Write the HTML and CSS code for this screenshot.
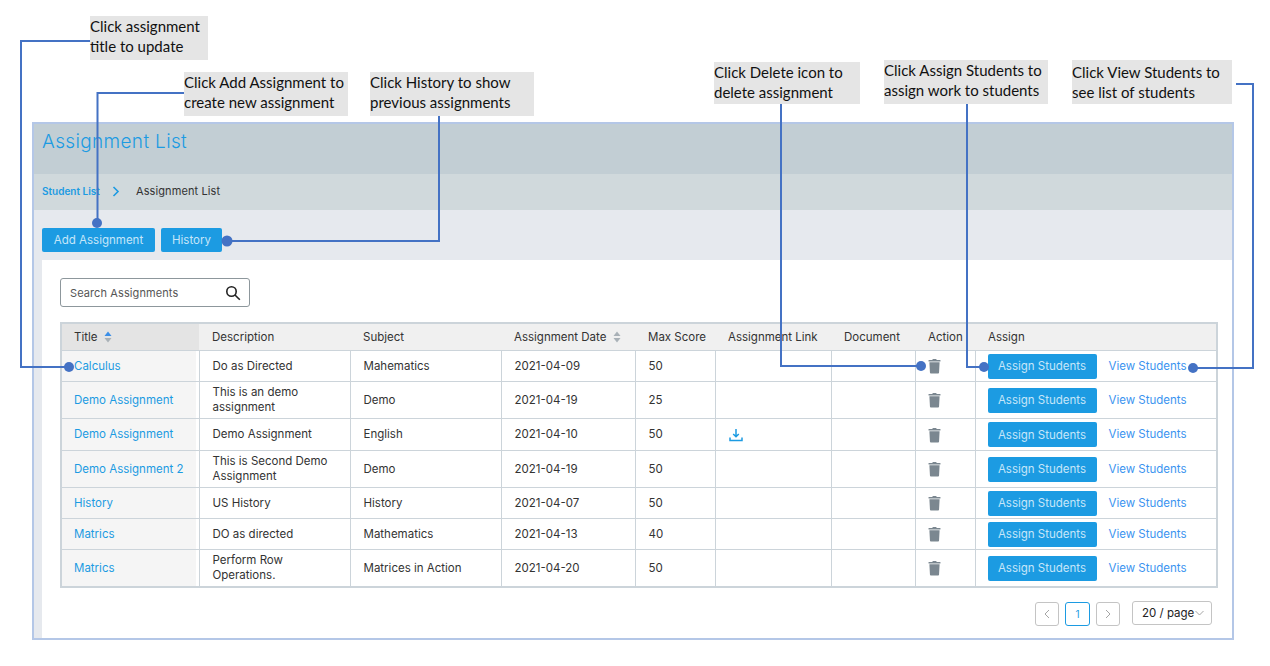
FILE: index.html
```html
<!DOCTYPE html>
<html lang="en">
<head>
    <meta charset="UTF-8">
    <title>Assignment List</title>
    <link rel="stylesheet" href="styles.css">
</head>
<body>
    <svg width="0" height="0" class="icon-defs">
        <symbol id="trash" viewBox="0 0 14 16">
            <path d="M4.6 1.6 5.2.4h3.6l.6 1.2H13.4v1.5H.6V1.6z"/>
            <path d="M1.5 4h11l-.6 11a1 1 0 0 1-1 1H3.1a1 1 0 0 1-1-1z"/>
        </symbol>
    </svg>

    <div class="frame">
        <div class="title-band"><h1>Assignment List</h1></div>
        <div class="crumb-band">
            <a class="crumb-link">Student List</a>
            <svg class="crumb-arrow" width="8" height="11" viewBox="0 0 8 11"><path d="M1.5 1 6 5.500 1.500 10"/></svg>
            <span class="crumb-current">Assignment List</span>
        </div>
        <div class="toolbar">
            <button class="btn btn-add">Add Assignment</button>
            <button class="btn btn-history">History</button>
        </div>
        <div class="content">
            <div class="search">
                <span>Search Assignments</span>
                <svg width="16" height="16" viewBox="0 0 16 16"><circle cx="6.500" cy="6.500" r="4.700"/><path d="M10 10l4.800 4.800"/></svg>
            </div>
            <table class="list">
                <colgroup>
                    <col class="c-title"><col class="c-desc"><col class="c-subject"><col class="c-date">
                    <col class="c-score"><col class="c-link"><col class="c-doc"><col class="c-action"><col class="c-assign">
                </colgroup>
                <thead>
                    <tr>
                        <th class="th-title">Title
                            <svg class="sort" width="8" height="12" viewBox="0 0 8 12"><path class="up" d="M4 .5 7.500 5H.5z"/><path class="down" d="M4 11.500.5 7h7z"/></svg>
                        </th>
                        <th>Description</th>
                        <th>Subject</th>
                        <th>Assignment Date
                            <svg class="sort" width="8" height="12" viewBox="0 0 8 12"><path class="down" d="M4 .5 7.500 5H.5z"/><path class="down" d="M4 11.500.5 7h7z"/></svg>
                        </th>
                        <th>Max Score</th>
                        <th>Assignment Link</th>
                        <th>Document</th>
                        <th>Action</th>
                        <th>Assign</th>
                    </tr>
                </thead>
                <tbody>
                    <tr class="r1">
                        <td class="td-title"><a>Calculus</a></td>
                        <td>Do as Directed</td><td>Mahematics</td><td>2021-04-09</td><td>50</td><td></td><td></td>
                        <td class="td-tight"><svg class="trash"><use href="#trash"/></svg></td>
                        <td class="td-tight"><div class="assign"><button class="btn btn-assign">Assign Students</button><a class="view">View Students</a></div></td>
                    </tr>
                    <tr class="r2">
                        <td class="td-title"><a>Demo Assignment</a></td>
                        <td>This is an demo<br>assignment</td><td>Demo</td><td>2021-04-19</td><td>25</td><td></td><td></td>
                        <td class="td-tight"><svg class="trash"><use href="#trash"/></svg></td>
                        <td class="td-tight"><div class="assign"><button class="btn btn-assign">Assign Students</button><a class="view">View Students</a></div></td>
                    </tr>
                    <tr class="r3">
                        <td class="td-title"><a>Demo Assignment</a></td>
                        <td>Demo Assignment</td><td>English</td><td>2021-04-10</td><td>50</td>
                        <td><svg class="download" width="14" height="14" viewBox="0 0 14 14"><path d="M7 1v7.500M4.200 6 7 8.800 9.800 6M1 9.500v3h12v-3"/></svg></td>
                        <td></td>
                        <td class="td-tight"><svg class="trash"><use href="#trash"/></svg></td>
                        <td class="td-tight"><div class="assign"><button class="btn btn-assign">Assign Students</button><a class="view">View Students</a></div></td>
                    </tr>
                    <tr class="r2">
                        <td class="td-title"><a>Demo Assignment 2</a></td>
                        <td>This is Second Demo<br>Assignment</td><td>Demo</td><td>2021-04-19</td><td>50</td><td></td><td></td>
                        <td class="td-tight"><svg class="trash"><use href="#trash"/></svg></td>
                        <td class="td-tight"><div class="assign"><button class="btn btn-assign">Assign Students</button><a class="view">View Students</a></div></td>
                    </tr>
                    <tr class="r1">
                        <td class="td-title"><a>History</a></td>
                        <td>US History</td><td>History</td><td>2021-04-07</td><td>50</td><td></td><td></td>
                        <td class="td-tight"><svg class="trash"><use href="#trash"/></svg></td>
                        <td class="td-tight"><div class="assign"><button class="btn btn-assign">Assign Students</button><a class="view">View Students</a></div></td>
                    </tr>
                    <tr class="r1">
                        <td class="td-title"><a>Matrics</a></td>
                        <td>DO as directed</td><td>Mathematics</td><td>2021-04-13</td><td>40</td><td></td><td></td>
                        <td class="td-tight"><svg class="trash"><use href="#trash"/></svg></td>
                        <td class="td-tight"><div class="assign"><button class="btn btn-assign">Assign Students</button><a class="view">View Students</a></div></td>
                    </tr>
                    <tr class="r2">
                        <td class="td-title"><a>Matrics</a></td>
                        <td>Perform Row<br>Operations.</td><td>Matrices in Action</td><td>2021-04-20</td><td>50</td><td></td><td></td>
                        <td class="td-tight"><svg class="trash"><use href="#trash"/></svg></td>
                        <td class="td-tight"><div class="assign"><button class="btn btn-assign">Assign Students</button><a class="view">View Students</a></div></td>
                    </tr>
                </tbody>
            </table>
            <div class="pager">
                <span class="page-btn"><svg width="6" height="10" viewBox="0 0 6 10"><path d="M5 1 1 5l4 4"/></svg></span>
                <span class="page-btn page-on">1</span>
                <span class="page-btn"><svg width="6" height="10" viewBox="0 0 6 10"><path d="M1 1l4 4-4 4"/></svg></span>
                <span class="page-size">20 / page<svg width="9" height="6" viewBox="0 0 9 6"><path d="M.5 1 4.500 5l4-4"/></svg></span>
            </div>
        </div>
    </div>

    <!-- callouts over the screenshot -->
    <div class="note note-title">Click assignment<br>title to update</div>
    <div class="note note-add">Click Add Assignment to<br>create new assignment</div>
    <div class="note note-history">Click History to show<br>previous assignments</div>
    <div class="note note-delete">Click Delete icon to<br>delete assignment</div>
    <div class="note note-assign">Click Assign Students to<br>assign work to students</div>
    <div class="note note-view">Click View Students to<br>see list of students</div>

    <svg class="wires" width="1270" height="666" viewBox="0 0 1270 666">
        <polyline points="90,41 21,41 21,367 69,367"/>
        <circle cx="69" cy="367" r="5"/>
        <polyline points="184,93 97.500,93 97.500,223"/>
        <circle cx="97" cy="223" r="5"/>
        <polyline points="439,116 439,241 227,241"/>
        <circle cx="227" cy="241" r="5.500"/>
        <polyline points="781,104 781,366 921,366"/>
        <circle cx="921" cy="366" r="5"/>
        <polyline points="967,104 967,367 984,367"/>
        <circle cx="984" cy="367" r="5"/>
        <polyline points="1236,84 1253,84 1253,368 1193,368"/>
        <circle cx="1193" cy="368" r="5"/>
    </svg>
</body>
</html>
```

FILE: styles.css
```css
body {
    margin: 0;
    padding: 122px 36px 0 32px;
    background-color: #fff;
    font-family: 'Inter', sans-serif;
    font-size: 11.5px;
    color: #333;
}

.icon-defs {
    position: absolute;
}

.frame {
    height: 518px;
    box-sizing: border-box;
    border: 2px solid #b4c7e7;
    background-color: #e6e9ee;
}

.title-band {
    height: 50px;
    padding: 5px 0 0 8px;
    box-sizing: border-box;
    background-color: #c2ced4;
}

h1 {
    margin: 0;
    font-size: 19px;
    line-height: 26px;
    font-weight: 300;
    letter-spacing: 0.35px;
    color: #1c9be2;
}

.crumb-band {
    height: 36px;
    padding: 0 0 2px 8px;
    box-sizing: border-box;
    display: flex;
    align-items: center;
    background-color: #d0d9dc;
}

.crumb-link {
    width: 70px;
    font-size: 10px;
    font-weight: 600;
    color: #1c9be2;
}

.crumb-arrow {
    fill: none;
    stroke: #1c9be2;
    stroke-width: 1.6;
}

.crumb-current {
    margin-left: 16px;
    font-size: 11px;
    letter-spacing: 0.1px;
    color: #333;
}

.toolbar {
    height: 50px;
    padding: 18px 0 0 8px;
    box-sizing: border-box;
    display: flex;
    gap: 6px;
}

.btn {
    height: 24px;
    padding: 0;
    border: 0;
    border-radius: 2px;
    background-color: #1c9be2;
    color: #c6e6f9;
    font-family: 'Inter', sans-serif;
    font-size: 11.5px;
}

.btn-add {
    width: 113px;
}

.btn-history {
    width: 61px;
}

.content {
    height: 378px;
    margin-left: 8px;
    padding: 18px 14px 0 18px;
    box-sizing: border-box;
    background-color: #fff;
}

.search {
    width: 190px;
    height: 29px;
    padding: 0 8px 0 9px;
    box-sizing: border-box;
    display: flex;
    align-items: center;
    justify-content: space-between;
    border: 1px solid #8d979c;
    border-radius: 3px;
    font-size: 11px;
    letter-spacing: 0.1px;
    color: #555;
}

.search svg {
    fill: none;
    stroke: #222;
    stroke-width: 1.6;
}

.list {
    width: 1156px;
    margin-top: 15px;
    table-layout: fixed;
    border-collapse: collapse;
    border: 2px solid #ccd4da;
}

.c-title { width: 138px; }
.c-desc { width: 151px; }
.c-subject { width: 151px; }
.c-date { width: 134px; }
.c-score { width: 80px; }
.c-link { width: 116px; }
.c-doc { width: 84px; }
.c-action { width: 60px; }
.c-assign { width: 242px; }

th {
    height: 26px;
    padding: 0 0 0 13px;
    text-align: left;
    font-weight: 400;
    background-color: #f0f0f0;
}

.th-title {
    padding-left: 12px;
    background-color: #e4e4e4;
}

td {
    padding: 0 0 0 13px;
    line-height: 15px;
    border: 1px solid #ccd4da;
    vertical-align: middle;
}

td.td-tight {
    padding-left: 12px;
}

.r1 td { height: 30px; }
.r2 td { height: 36px; }
.r3 td { height: 31px; }

td.td-title {
    padding-left: 12px;
    background-color: #f5f5f5;
    box-shadow: inset -3px 0 0 #fff;
}

.td-title a {
    color: #1c9be2;
}

.sort {
    margin-left: 3px;
    vertical-align: -2px;
}

.sort .up { fill: #3b8fe8; }
.sort .down { fill: #a9b1b7; }

.trash {
    width: 13px;
    height: 16px;
    display: block;
    fill: #7b8790;
}

.download {
    display: block;
    fill: none;
    stroke: #1c9be2;
    stroke-width: 1.5;
}

.assign {
    display: flex;
    align-items: center;
    gap: 12px;
}

.btn-assign {
    width: 109px;
    height: 25px;
}

.view {
    color: #3b94f0;
}

.pager {
    margin-top: 13px;
    margin-right: 6px;
    display: flex;
    justify-content: flex-end;
    align-items: flex-start;
    gap: 6px;
}

.page-btn {
    width: 24px;
    height: 24px;
    margin-top: 1px;
    box-sizing: border-box;
    display: flex;
    align-items: center;
    justify-content: center;
    border: 1px solid #c4c4c4;
    border-radius: 3px;
    font-size: 10px;
}

.page-btn svg, .page-size svg {
    fill: none;
    stroke: #a5a5a5;
}

.page-on {
    width: 25px;
    border-color: #1c9be2;
    color: #1c9be2;
}

.page-size {
    width: 80px;
    height: 24px;
    margin-left: 6px;
    box-sizing: border-box;
    display: flex;
    align-items: center;
    padding-left: 9px;
    gap: 1px;
    border: 1px solid #c4c4c4;
    border-radius: 3px;
    color: #222;
}

/* callouts and connector lines sit on top of the page */
.note {
    position: absolute;
    box-sizing: border-box;
    background-color: #e5e5e5;
    font-family: 'Lato', sans-serif;
    font-size: 15px;
    line-height: 20px;
    color: #111;
    white-space: nowrap;
}

.note-title { left: 90px; top: 16px; width: 118px; height: 44px; }
.note-add { left: 184px; top: 72px; width: 164px; height: 44px; }
.note-history { left: 370px; top: 72px; width: 164px; height: 44px; }
.note-delete { left: 714px; top: 62px; width: 146px; height: 42px; }
.note-assign { left: 884px; top: 60px; width: 164px; height: 44px; }
.note-view { left: 1072px; top: 60px; width: 160px; height: 44px; padding-top: 2px; }

.wires {
    position: absolute;
    left: 0;
    top: 0;
    pointer-events: none;
}

.wires polyline {
    fill: none;
    stroke: #4472c4;
    stroke-width: 2;
}

.wires circle {
    fill: #4472c4;
}
```
